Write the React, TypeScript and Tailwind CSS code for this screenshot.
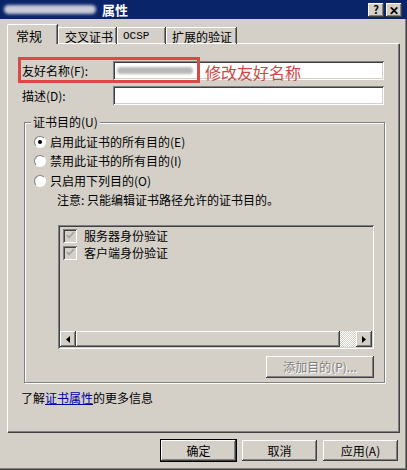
import React from "react";

const raised =
  "bg-[#d4d0c8] shadow-[inset_-1px_-1px_0_#404040,inset_1px_1px_0_#ffffff,inset_-2px_-2px_0_#808080,inset_2px_2px_0_#d4d0c8]";
const sunken =
  "shadow-[inset_1px_1px_0_#808080,inset_-1px_-1px_0_#ffffff,inset_2px_2px_0_#404040,inset_-2px_-2px_0_#d4d0c8]";
const tab =
  "h-[17px] ml-[1px] border-t border-l border-b border-white shadow-[inset_-1px_0_0_#808080,1px_0_0_#404040] pl-[5px] whitespace-nowrap";

function Radio({ checked, label }: { checked?: boolean; label: string }) {
  return (
    <div className="flex items-center h-[19px]">
      <div className="w-[12px] h-[12px] rounded-full bg-white border border-t-[#808080] border-l-[#808080] border-b-white border-r-white flex items-center justify-center">
        {checked && <div className="w-[4px] h-[4px] rounded-full bg-black" />}
      </div>
      <span className="ml-[4px]">{label}</span>
    </div>
  );
}

function Check({ label }: { label: string }) {
  return (
    <div className="flex items-center h-[17px]">
      <div className={`w-[14px] h-[14px] bg-[#d4d0c8] ${sunken} flex items-center justify-center`}>
        <svg width="9" height="9" viewBox="0 0 9 9">
          <path d="M1 4 L3 6.5 L8 1" stroke="#a0a0a0" strokeWidth="1.6" fill="none" />
        </svg>
      </div>
      <span className="ml-[7px]">{label}</span>
    </div>
  );
}

function Arrow({ dir }: { dir: "l" | "r" }) {
  return (
    <div className={`w-[16px] h-[16px] ${raised} flex items-center justify-center`}>
      <svg width="4" height="7" viewBox="0 0 4 7">
        {dir === "l" ? <path d="M4 0 L0 3.5 L4 7 Z" fill="#000" /> : <path d="M0 0 L4 3.5 L0 7 Z" fill="#000" />}
      </svg>
    </div>
  );
}

function Button({ label, primary }: { label: string; primary?: boolean }) {
  return (
    <div
      className={`w-[75px] h-[21px] flex items-center justify-center ${raised} ${
        primary ? "outline outline-1 outline-black" : ""
      }`}
    >
      {label}
    </div>
  );
}

export default function App() {
  return (
    <div className="w-[407px] h-[470px] bg-[#d4d0c8] flex flex-col text-[12px] leading-[14px] text-black overflow-hidden shadow-[inset_-1px_-1px_0_#404040,inset_-2px_-2px_0_#808080] font-['Noto_Sans_CJK_SC','Noto_Sans_CJK_JP',sans-serif]">
      {/* title bar */}
      <div className="h-[19px] bg-[#0a246a] flex items-center pl-[4px] pr-[5px] shrink-0">
        <div className="w-[92px] h-[9px] rounded-full bg-[#c9ccd8] blur-[1.5px]" />
        <span className="ml-[6px] text-white font-bold text-[13px]">属性</span>
        <div className="ml-auto flex gap-[2px]">
          <div className={`w-[16px] h-[14px] ${raised} flex items-center justify-center font-bold text-[11px] leading-none`}>?</div>
          <div className={`w-[16px] h-[14px] ${raised} flex items-center justify-center font-bold text-[12px] leading-none`}>✕</div>
        </div>
      </div>

      <div className="flex flex-col pl-[7px] pr-[8px] pt-[5px]">
        {/* tabs */}
        <div className="flex items-end h-[20px] relative z-10">
          <div className="w-[50px] h-[20px] bg-[#d4d0c8] border-t border-l border-white shadow-[inset_-1px_0_0_#808080,1px_0_0_#404040] rounded-tl-[2px] pl-[8px] pt-[3px] whitespace-nowrap text-[13px] leading-[15px]">
            常规
          </div>
          <div className={`${tab} w-[58px] pt-[1px] text-[12px] leading-[15px] pl-[6px]`}>交叉证书</div>
          <div className={`${tab} w-[48px] pt-[2px] text-[11px] leading-[13px] font-['Liberation_Mono',monospace]`}>OCSP</div>
          <div className={`${tab} w-[70px] pt-[1px] text-[12px] leading-[15px] pl-[4px]`}>扩展的验证</div>
        </div>

        {/* panel */}
        <div className="h-[389px] -mt-[1px] border-l border-t border-white shadow-[inset_-1px_-1px_0_#808080,1px_1px_0_#404040] relative pl-[14px]">
          <div className="flex items-center mt-[17px] h-[19px]">
            <span className="w-[91px]">友好名称(F):</span>
            <div className={`w-[271px] h-[19px] bg-white ${sunken} flex items-center pl-[4px]`}>
              <div className="w-[76px] h-[7px] rounded-full bg-[#b8b8b8] blur-[1px]" />
            </div>
          </div>
          <div className="flex items-center mt-[6px] h-[19px]">
            <span className="w-[91px]">描述(D):</span>
            <div className={`w-[271px] h-[19px] bg-white ${sunken}`} />
          </div>

          {/* annotation */}
          <div className="absolute left-[10px] top-[13px] w-[182px] h-[26px] border-[3px] border-[#dc4848]" />
          <div className="absolute left-[197px] top-[19px] text-[16px] leading-[18px] text-[#d24545]">修改友好名称</div>

          {/* group box */}
          <div className="relative mt-[17px] ml-[2px] w-[361px] h-[261px] border border-[#808080] shadow-[1px_1px_0_#ffffff,inset_1px_1px_0_#ffffff] pl-[9px]">
            <span className="absolute -top-[8px] left-[6px] px-[2px] bg-[#d4d0c8]">证书目的(U)</span>
            <div className="mt-[9px]">
              <Radio checked label="启用此证书的所有目的(E)" />
              <Radio label="禁用此证书的所有目的(I)" />
              <div className="mt-[1px]">
                <Radio label="只启用下列目的(O)" />
              </div>
              <div className="ml-[23px] h-[19px] flex items-center">注意: 只能编辑证书路径允许的证书目的。</div>
            </div>
            <div className={`ml-[24px] mt-[16px] w-[316px] h-[124px] ${sunken} p-[2px] flex flex-col`}>
              <div className="pl-[3px] flex-1">
                <Check label="服务器身份验证" />
                <Check label="客户端身份验证" />
              </div>
              <div className="flex h-[16px]">
                <Arrow dir="l" />
                <div className={`flex-1 h-[16px] ${raised}`} />
                <div className="w-[16px] h-[16px] bg-[repeating-conic-gradient(#ffffff_0%_25%,#d4d0c8_0%_50%)] bg-[length:2px_2px]" />
                <Arrow dir="r" />
              </div>
            </div>
            <div className="flex justify-end w-[340px] mt-[7px]">
              <div className={`w-[108px] h-[22px] ${raised} flex items-center justify-center text-[#808080] [text-shadow:1px_1px_0_#ffffff]`}>
                添加目的(P)...
              </div>
            </div>
          </div>

          <div className="mt-[8px] -ml-[1px] h-[14px]">
            了解<span className="text-[#0000a0] underline">证书属性</span>的更多信息
          </div>
        </div>

        {/* buttons */}
        <div className="flex justify-end gap-[6px] mt-[8px] pr-[1px]">
          <Button label="确定" primary />
          <Button label="取消" />
          <Button label="应用(A)" />
        </div>
      </div>
    </div>
  );
}
